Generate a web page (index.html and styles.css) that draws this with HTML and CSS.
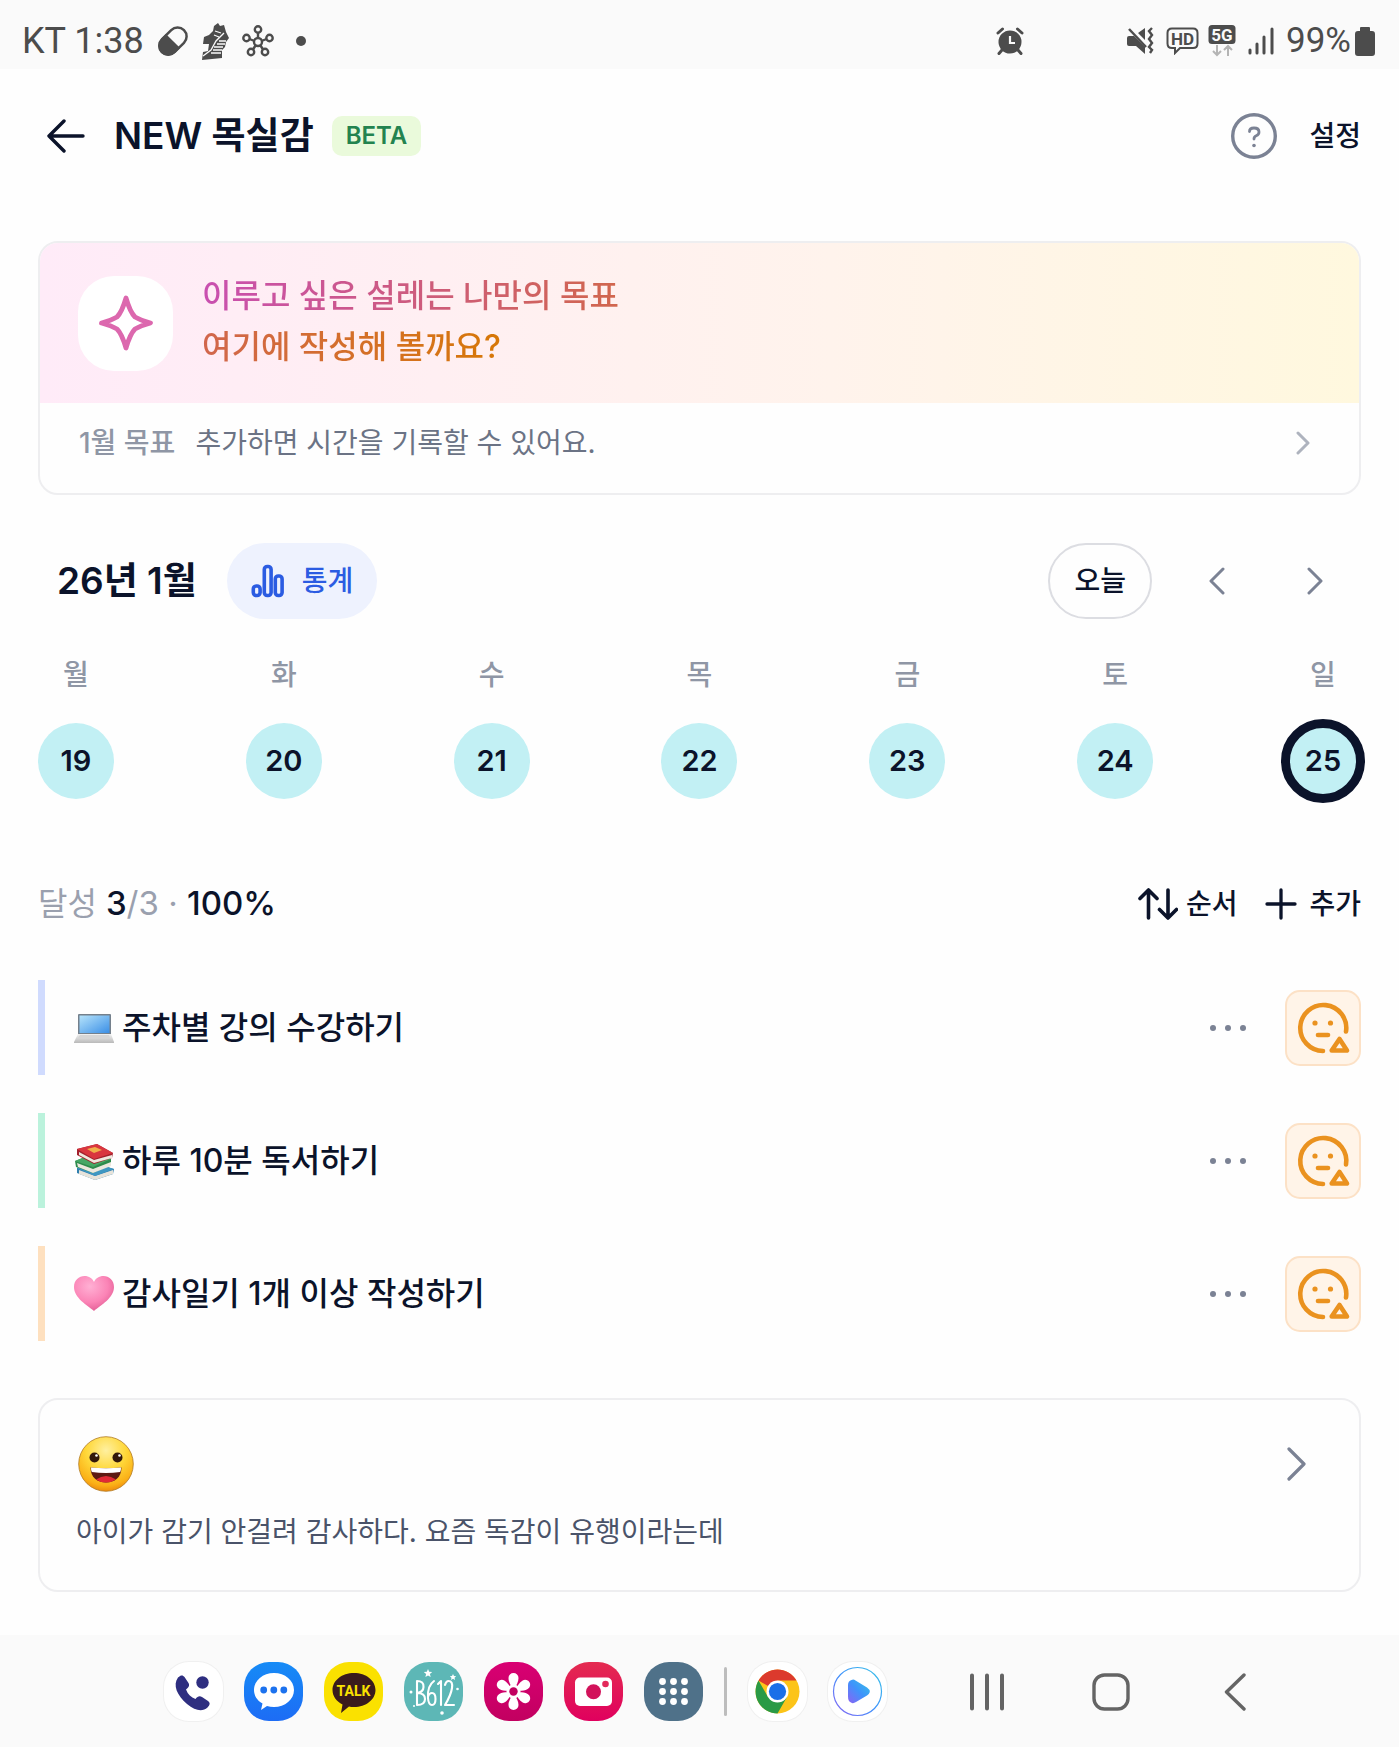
FILE: index.html
```html
<!DOCTYPE html>
<html lang="ko">
<head>
<meta charset="utf-8">
<meta name="viewport" content="width=device-width, initial-scale=1">
<title>NEW 목실감</title>
<link rel="stylesheet" href="styles.css">
</head>
<body>
<svg class="defs" width="0" height="0" aria-hidden="true">
  <defs>
    <linearGradient id="screenFill" x1="0" y1="0" x2="1" y2="1"><stop offset="0" stop-color="#b5e3fb"/><stop offset="1" stop-color="#3b8fe6"/></linearGradient>
    <linearGradient id="baseFill" x1="0" y1="0" x2="0" y2="1"><stop offset="0" stop-color="#f2f2f2"/><stop offset="1" stop-color="#b9b9b9"/></linearGradient>
    <radialGradient id="heartFill" cx=".4" cy=".3" r=".75"><stop offset="0" stop-color="#ffb0d4"/><stop offset=".6" stop-color="#fb84b6"/><stop offset="1" stop-color="#e05a92"/></radialGradient>
    <radialGradient id="faceFill" cx=".5" cy=".25" r=".8"><stop offset="0" stop-color="#fff0a0"/><stop offset=".45" stop-color="#ffd83a"/><stop offset=".8" stop-color="#fbb016"/><stop offset="1" stop-color="#e87a08"/></radialGradient>
    <linearGradient id="playFill" x1="0" y1="1" x2="1" y2="0"><stop offset="0" stop-color="#8a63f4"/><stop offset=".5" stop-color="#3f93fb"/><stop offset="1" stop-color="#35c3e6"/></linearGradient>
    <symbol id="face" viewBox="0 0 76 76">
      <g fill="none" stroke="#ea921f" stroke-width="4.600" stroke-linecap="round" stroke-linejoin="round">
        <path d="M61 41.500A23 23 0 1 0 38 61"/>
        <path d="M33 45h10"/>
        <path d="M54.500 49l7.500 11.500H46.700z"/>
      </g>
      <circle cx="30" cy="33" r="2.600" fill="#ea921f"/><circle cx="45.500" cy="33" r="2.600" fill="#ea921f"/>
    </symbol>
    <symbol id="dots" viewBox="0 0 38 8"><g fill="#7b8294"><circle cx="4" cy="4" r="3"/><circle cx="19" cy="4" r="3"/><circle cx="34" cy="4" r="3"/></g></symbol>
  </defs>
</svg>

<div class="screen">
  <div class="status">
    <span class="status-time">KT 1:38</span>
    <svg class="status-pill" width="34" height="34" viewBox="0 0 34 34"><g transform="rotate(-45 17 17)"><rect x="1.500" y="8" width="31" height="18" rx="9" fill="none" stroke="#4c4c4c" stroke-width="2.500"/><path d="M17 7H10a10 10 0 0 0 0 20h7z" fill="#4c4c4c"/></g></svg>
    <svg width="30" height="38" viewBox="0 0 30 38"><path d="M14 4l4-3 2 3 4-1 2 7 3 6-3 4-1 5-3 3 0 8-20 2 1-8 5-1 1-7H3l1-7 5-2 4-4z" fill="#4c4c4c"/><g stroke="#fafafa" stroke-width="1.300" fill="none"><path d="M14 25h9M13 28h9M11 31h10M17 22h8M19 19h7M3 34l8-6 5-9 8-8M15 9l6 2M14 13l5 2"/></g></svg>
    <svg class="status-hub" width="32" height="32" viewBox="0 0 32 32"><g fill="none" stroke="#4c4c4c" stroke-width="2.400"><circle cx="16" cy="17" r="4"/><circle cx="16" cy="4.500" r="3.200"/><circle cx="4.500" cy="13" r="3.200"/><circle cx="27.500" cy="13" r="3.200"/><circle cx="9" cy="27" r="3.200"/><circle cx="23" cy="27" r="3.200"/><path d="M16 8v5M7.500 14l5 2M24.500 14l-5 2M11 24.500l2.500-4M21 24.500l-2.500-4"/></g></svg>
    <svg width="10" height="10" viewBox="0 0 10 10"><circle cx="5" cy="5" r="5" fill="#4c4c4c"/></svg>
    <span class="status-space"></span>
    <svg class="status-alarm" width="28" height="28" viewBox="0 0 28 28"><circle cx="14" cy="15" r="11.500" fill="#4c4c4c"/><path d="M14 9v7h5" fill="none" stroke="#fafafa" stroke-width="2.200"/><path d="M2 6l4.500-4M26 6l-4.500-4M6 23l-3 3.500M22 23l3 3.500" stroke="#4c4c4c" stroke-width="3" stroke-linecap="round"/></svg>
    <svg width="28" height="28" viewBox="0 0 28 28"><path d="M1 11q0-2 2-2h5l11 11v7l-9-8H3q-2 0-2-2zM12 6l7-5v12z" fill="#4c4c4c"/><path d="M3 2l17 18" stroke="#4c4c4c" stroke-width="2.500"/><path d="M26 1l-3 3 3 4-3 4 3 4-3 4 3 3-2 3" fill="none" stroke="#4c4c4c" stroke-width="2.400"/></svg>
    <svg class="status-hd" width="33" height="28" viewBox="0 0 33 28"><path d="M6 1.500h21q4.500 0 4.500 4.500v10.500q0 4.500-4.500 4.500H14l-5 5v-5H6q-4.500 0-4.500-4.500V6q0-4.500 4.500-4.500z" fill="none" stroke="#4c4c4c" stroke-width="2"/><text x="16.500" y="17.500" text-anchor="middle" class="glyph-hd">HD</text></svg>
    <svg class="status-5g" width="28" height="32" viewBox="0 0 28 32"><rect x=".5" width="27" height="19" rx="3.500" fill="#4c4c4c"/><text x="14" y="16" text-anchor="middle" class="glyph-5g">5G</text><path d="M9 20v10M5 26l4 4 4-4M20 31V21M16 25l4-4 4 4" fill="none" stroke="#b4b4b4" stroke-width="2"/></svg>
    <svg class="status-bars" width="26" height="28" viewBox="0 0 26 28"><path d="M2 23v3M9 17v9M16 10v16M24 2v24" stroke="#4c4c4c" stroke-width="3" stroke-linecap="round"/></svg>
    <span class="status-battery">99%</span>
    <svg width="20" height="29" viewBox="0 0 20 29"><path d="M6 0h8q1 0 1 1v3h2q3 0 3 3v19q0 3-3 3H3q-3 0-3-3V7q0-3 3-3h2V1q0-1 1-1z" fill="#4c4c4c"/></svg>
  </div>

  <header class="header">
    <button class="icon-button" aria-label="뒤로"><svg width="38" height="34" viewBox="0 0 38 34"><path d="M36 17H2M17 2L2 17l15 15" fill="none" stroke="#0b132a" stroke-width="3.400" stroke-linecap="round" stroke-linejoin="round"/></svg></button>
    <h1 class="title">NEW 목실감</h1>
    <span class="badge">BETA</span>
    <button class="icon-button help" aria-label="도움말"><svg width="46" height="46" viewBox="0 0 46 46"><circle cx="23" cy="23" r="21.300" fill="none" stroke="#7b8294" stroke-width="3.400"/><path d="M18.500 18.500q0-3.500 4.500-3.500 5 0 5 4 0 2.600-2.800 3.700-2.200 .9-2.200 3.300" fill="none" stroke="#7b8294" stroke-width="2.800" stroke-linecap="round"/><circle cx="23" cy="32.500" r="1.800" fill="#7b8294"/></svg></button>
    <button class="text-button">설정</button>
  </header>

  <main class="main">
    <section class="goal">
      <div class="goal-banner">
        <span class="goal-icon"><svg width="56" height="56" viewBox="0 0 56 56"><path d="M28 3c3.500 12 7 17 9 19 3.500 2 8 4 15.500 6-7.500 2-12 4-15.500 6-2 2-5.500 7-9 19-3.500-12-7-17-9-19-3.500-2-8-4-15.500-6 7.500-2 12-4 15.500-6 2-2 5.500-7 9-19z" fill="none" stroke="#dc68ae" stroke-width="4.800" stroke-linejoin="round"/></svg></span>
        <p class="goal-text"><span>이루고 싶은 설레는 나만의 목표<br>여기에 작성해 볼까요?</span></p>
      </div>
      <a class="goal-link" href="#goal">
        <span class="goal-month">1월 목표</span>
        <span>추가하면 시간을 기록할 수 있어요.</span>
        <svg width="14" height="24" viewBox="0 0 14 24"><path d="M2 2l10 10L2 22" fill="none" stroke="#aeb3be" stroke-width="3" stroke-linecap="round" stroke-linejoin="round"/></svg>
      </a>
    </section>

    <section class="calendar">
      <div class="month-row">
        <h2 class="month">26년 1월</h2>
        <button class="pill stats"><svg width="34" height="34" viewBox="0 0 34 34"><g fill="none" stroke="#2b5ce2" stroke-width="3.600"><rect x="2.300" y="22" width="6.800" height="9.500" rx="3"/><rect x="13.300" y="2.500" width="6.800" height="29" rx="3"/><rect x="24.300" y="12" width="6.800" height="19.500" rx="3"/></g></svg>통계</button>
        <button class="pill today">오늘</button>
        <div class="pager">
          <button class="icon-button" aria-label="이전 주"><svg width="18" height="28" viewBox="0 0 18 28"><path d="M15 2L3 14l12 12" fill="none" stroke="#7b8294" stroke-width="3" stroke-linecap="round" stroke-linejoin="round"/></svg></button>
          <button class="icon-button" aria-label="다음 주"><svg width="18" height="28" viewBox="0 0 18 28"><path d="M3 2l12 12L3 26" fill="none" stroke="#7b8294" stroke-width="3" stroke-linecap="round" stroke-linejoin="round"/></svg></button>
        </div>
      </div>
      <ol class="week">
        <li>월<button class="day">19</button></li>
        <li>화<button class="day">20</button></li>
        <li>수<button class="day">21</button></li>
        <li>목<button class="day">22</button></li>
        <li>금<button class="day">23</button></li>
        <li>토<button class="day">24</button></li>
        <li>일<button class="day day-selected" aria-current="date">25</button></li>
      </ol>
    </section>

    <section class="todo">
      <div class="todo-head">
        <p class="progress">달성 <span class="figures"><b>3</b>/3 · <b>100%</b></span></p>
        <button class="text-button"><svg width="40" height="32" viewBox="0 0 40 32"><path d="M10.500 30V2M2 10.500L10.500 2l8.500 8.500M30 2v28M21.500 21.500L30 30l8.500-8.500" fill="none" stroke="#0b132a" stroke-width="3.600" stroke-linecap="round" stroke-linejoin="round"/></svg>순서</button>
        <button class="text-button add"><svg width="32" height="32" viewBox="0 0 32 32"><path d="M16 2v28M2 16h28" stroke="#0b132a" stroke-width="3.300" stroke-linecap="round"/></svg>추가</button>
      </div>
      <ul class="tasks">
        <li class="task task-blue">
          <svg width="40" height="40" viewBox="0 0 40 40"><path d="M5 6h31q1 0 1 1v19H4V7q0-1 1-1z" fill="#74808c"/><path d="M5.500 7.500h30v17.500h-30z" fill="url(#screenFill)"/><path d="M4 26h33l3 8v1H0v-1z" fill="url(#baseFill)"/><path d="M6 27h29l1 3H4z" fill="#d6d6d6"/></svg>
          <span class="task-name">주차별 강의 수강하기</span>
          <button class="icon-button" aria-label="더보기"><svg width="38" height="8"><use href="#dots"/></svg></button>
          <button class="mood" aria-label="평가"><svg width="76" height="76"><use href="#face"/></svg></button>
        </li>
        <li class="task task-green">
          <svg width="40" height="40" viewBox="0 0 40 40"><path d="M3 27l14-6 23 7-1 5-18 6-18-7z" fill="#2f7fae"/><path d="M5 29l16 6 18-6v4l-18 6-16-6z" fill="#e7e3da"/><path d="M3 27l14-6 23 7-19 7z" fill="#3f97c2"/><path d="M1 20l15-6 21 4v6l-18 8-17-6z" fill="#2e8b4c"/><path d="M3 22l16 6 18-7v4l-18 7-15-6z" fill="#ece8de"/><path d="M1 20l15-6 21 4-18 8z" fill="#46a765"/><path d="M3 8l20-5 16 9-1 5-18 6L3 14z" fill="#a3202d"/><path d="M5 11l15 8 18-5v3l-18 5-15-8z" fill="#efe9df"/><path d="M3 8l20-5 16 9-19 6z" fill="#d9363f"/><path d="M13 8l8-2 7 3-8 3z" fill="#f0b04a"/></svg>
          <span class="task-name">하루 10분 독서하기</span>
          <button class="icon-button" aria-label="더보기"><svg width="38" height="8"><use href="#dots"/></svg></button>
          <button class="mood" aria-label="평가"><svg width="76" height="76"><use href="#face"/></svg></button>
        </li>
        <li class="task task-orange">
          <svg width="40" height="40" viewBox="0 0 40 40"><path d="M20 37C13 31 0 24 0 13 0 6 5 2 10.500 2 15 2 18.500 4.500 20 8c1.500-3.500 5-6 9.500-6C35 2 40 6 40 13c0 11-13 18-20 24z" fill="url(#heartFill)"/></svg>
          <span class="task-name">감사일기 1개 이상 작성하기</span>
          <button class="icon-button" aria-label="더보기"><svg width="38" height="8"><use href="#dots"/></svg></button>
          <button class="mood" aria-label="평가"><svg width="76" height="76"><use href="#face"/></svg></button>
        </li>
      </ul>
    </section>

    <a class="note" href="#note">
      <span class="note-head">
        <svg width="56" height="56" viewBox="0 0 56 56"><circle cx="28" cy="28" r="27.300" fill="url(#faceFill)" stroke="#b07a25" stroke-width=".8"/><circle cx="16.500" cy="21.500" r="5" fill="#33180a"/><circle cx="39.500" cy="21.500" r="5" fill="#33180a"/><circle cx="18.500" cy="19.500" r="1.300" fill="#fff"/><circle cx="41.500" cy="19.500" r="1.300" fill="#fff"/><path d="M12.500 31.500q15.500 1.500 31 0c0 10-7 15-15.500 15s-15.500-5-15.500-15z" fill="#5d1a12"/><path d="M13 31.500q15 1.500 30 0 .2 2-.8 4.500-14.200 1.800-28.400 0-1-2.500-.8-4.500z" fill="#fff"/><path d="M18 43.500q10-7 20 0-4.500 3-10 3t-10-3z" fill="#e02a35"/></svg>
        <svg width="20" height="34" viewBox="0 0 20 34"><path d="M2 2l15 15L2 32" fill="none" stroke="#7b8294" stroke-width="3.200" stroke-linecap="round" stroke-linejoin="round"/></svg>
      </span>
      <span class="note-text">아이가 감기 안걸려 감사하다. 요즘 독감이 유행이라는데</span>
    </a>
  </main>

  <nav class="dock">
    <div class="apps">
      <button class="app app-white" aria-label="전화"><svg width="59" height="59" viewBox="0 0 59 59"><path d="M14 15.500c3-3 5-2.500 6.500-.5l4 6c1.500 2.500 0 4.500-2.500 6.500 2 5 5 8 9.500 9.500 2-2.500 4-3.500 6.500-2l6 4c2.500 2 2 4-.5 6.500-5 4.500-12 3.500-20.500-3.500C13 33.500 8.500 23 14 15.500z" fill="#2e2e80"/><circle cx="38.500" cy="20.500" r="6.200" fill="#2e2e80"/></svg></button>
      <button class="app app-blue" aria-label="메시지"><svg width="59" height="59" viewBox="0 0 59 59"><path d="M30 11c11 0 20 7.500 20 17s-9 17-20 17q-4 0-7-1l-6 4 1.500-6.500C13 38.500 10 33.500 10 28c0-9.500 9-17 20-17z" fill="#fff"/><g fill="#1c72ee"><circle cx="19.700" cy="28" r="3.400"/><circle cx="29.800" cy="28" r="3.400"/><circle cx="39.800" cy="28" r="3.400"/></g></svg></button>
      <button class="app app-yellow" aria-label="톡"><svg width="59" height="59" viewBox="0 0 59 59"><path d="M30 11c12 0 21.500 7.500 21.500 17S42 45 30 45q-3 0-5-.5L17 51l1.500-8.500C12.500 39.500 8.500 34 8.500 28 8.500 18.500 18 11 30 11z" fill="#3a1a1c"/><text x="29.500" y="34" text-anchor="middle" class="glyph-talk">TALK</text></svg></button>
      <button class="app app-teal" aria-label="B612"><svg width="59" height="59" viewBox="0 0 59 59"><g fill="none" stroke="#fff" stroke-width="2.100" stroke-linecap="round" stroke-linejoin="round"><path d="M13 19v24M13 19q7 0 6.500 6 0 5-6.500 6 8 0 8 6t-8 6"/><path d="M30 19q-7 5-6 17 .5 7 4 7 3.500 0 3.500-6t-3.500-6q-3 0-4 4"/><path d="M34 22l3-3v24"/><path d="M41 23q1-4 3.500-4 4.500 0 3.500 7-1 7-7 17h9"/></g><g fill="#fff"><path d="M24 7l1.200 2.800 3 .2-2.300 2 .8 3-2.700-1.600-2.600 1.600.7-3-2.300-2 3-.2zM49 12l1 2 2.200.2-1.700 1.500.6 2.300-2.100-1.200-2 1.200.5-2.300-1.700-1.500 2.200-.2z"/><circle cx="7" cy="30" r="1.500"/><circle cx="53.500" cy="27" r="1.300"/><circle cx="38" cy="51" r="1.800"/><circle cx="10" cy="44" r="1"/></g></svg></button>
      <button class="app app-magenta" aria-label="갤러리"><svg width="59" height="59" viewBox="0 0 59 59"><g fill="#fff"><g id="petal"><path d="M29.500 28c-3-5-5-8-5-12a5 5 0 0 1 10 0c0 4-2 7-5 12z"/></g><use href="#petal" transform="rotate(60 29.500 29.500)"/><use href="#petal" transform="rotate(120 29.500 29.500)"/><use href="#petal" transform="rotate(180 29.500 29.500)"/><use href="#petal" transform="rotate(240 29.500 29.500)"/><use href="#petal" transform="rotate(300 29.500 29.500)"/><circle cx="29.500" cy="29.500" r="7"/></g><circle cx="29.500" cy="29.500" r="4.200" fill="#c20060"/></svg></button>
      <button class="app app-red" aria-label="카메라"><svg width="59" height="59" viewBox="0 0 59 59"><rect x="11" y="15.500" width="37" height="28.500" rx="5" fill="#fff"/><circle cx="29.500" cy="29.800" r="7.500" fill="#d2125a"/><circle cx="41.500" cy="22" r="3.300" fill="#e2295a"/></svg></button>
      <button class="app app-slate" aria-label="앱 목록"><svg width="59" height="59" viewBox="0 0 59 59"><g fill="#fff"><circle cx="18.500" cy="19.500" r="3.400"/><circle cx="29.500" cy="19.500" r="3.400"/><circle cx="40.500" cy="19.500" r="3.400"/><circle cx="18.500" cy="29.500" r="3.400"/><circle cx="29.500" cy="29.500" r="3.400"/><circle cx="40.500" cy="29.500" r="3.400"/><circle cx="18.500" cy="39.500" r="3.400"/><circle cx="29.500" cy="39.500" r="3.400"/><circle cx="40.500" cy="39.500" r="3.400"/></g></svg></button>
      <span class="divider"></span>
      <button class="app app-white" aria-label="Chrome"><svg width="59" height="59" viewBox="0 0 59 59"><circle cx="29.500" cy="29.500" r="22" fill="#fcc419"/><path d="M29.500 29.500L10.500 18.500A22 22 0 0 1 48.500 18.500H29.500z" fill="#dc3a2d"/><path d="M10.500 18.500A22 22 0 0 0 29.500 51.500L39 35 29.500 29.500 20 35z" fill="#2a9a46"/><circle cx="29.500" cy="29.500" r="11" fill="#fff"/><circle cx="29.500" cy="29.500" r="8.600" fill="#1a6fe8"/></svg></button>
      <button class="app app-white" aria-label="재생"><svg width="59" height="59" viewBox="0 0 59 59"><circle cx="29.500" cy="29.500" r="24" fill="#fff" stroke="url(#playFill)" stroke-width="1.200"/><path d="M23.500 18q2-1 4 .5l11.500 7q5.500 4 0 8L28 40q-3 2-5 .5-3-1-3-6V23q0-4 3.500-5z" fill="url(#playFill)"/></svg></button>
    </div>
    <div class="keys">
      <button class="icon-button" aria-label="최근 앱"><svg width="36" height="38" viewBox="0 0 36 38"><path d="M3 2.500v33M18 2.500v33M33 2.500v33" stroke="#646464" stroke-width="4" stroke-linecap="round"/></svg></button>
      <button class="icon-button" aria-label="홈"><svg width="38" height="38" viewBox="0 0 38 38"><rect x="2" y="2" width="34" height="34" rx="10.500" fill="none" stroke="#646464" stroke-width="3.400"/></svg></button>
      <button class="icon-button" aria-label="뒤로 가기"><svg width="22" height="38" viewBox="0 0 22 38"><path d="M20 2L2.500 19 20 36" fill="none" stroke="#646464" stroke-width="3.400" stroke-linecap="round" stroke-linejoin="round"/></svg></button>
    </div>
  </nav>
</div>
</body>
</html>
```
FILE: styles.css
```css
* {
  box-sizing: border-box;
}

body {
  margin: 0;
  background: #fefefe;
  color: #0b132a;
  font-family: Inter, "Noto Sans CJK KR", sans-serif;
  font-size: 28px;
  line-height: 40px;
}

.defs {
  display: block;
}

h1,
h2,
p,
ol,
ul {
  margin: 0;
  padding: 0;
  font-weight: inherit;
}

ol,
ul {
  list-style: none;
}

button {
  padding: 0;
  border: 0;
  background: none;
  color: inherit;
  font: inherit;
}

a {
  color: inherit;
  text-decoration: none;
}

svg {
  flex: none;
}

.screen {
  display: flex;
  flex-direction: column;
  min-height: 100vh;
}

/* Status bar */

.status {
  display: flex;
  align-items: center;
  height: 69px;
  padding: 13px 24px 0 22px;
  background: #fafafa;
  color: #4c4c4c;
  font-family: Roboto, sans-serif;
  font-size: 35px;
}

.status-time {
  font-size: 36px;
}

.status-pill {
  margin: 0 10px 0 12px;
}

.status-hub {
  margin: 0 22px 0 12px;
}

.status-space {
  flex: 1;
}

.status-alarm {
  margin-right: 102px;
}

.status-hd {
  margin-left: 12px;
}

.status-5g {
  margin: 0 12px 0 9px;
}

.status-battery {
  margin: 0 4px 0 12px;
}

.glyph-hd {
  fill: #4c4c4c;
  font: 700 17px Roboto, sans-serif;
}

.glyph-5g {
  fill: #fafafa;
  font: 700 17px Roboto, sans-serif;
}

.glyph-talk {
  fill: #fae100;
  font: 700 14px Roboto, sans-serif;
}

/* App header */

.header {
  display: flex;
  align-items: center;
  height: 134px;
  padding: 0 38px 0 47px;
}

.icon-button {
  display: flex;
  align-items: center;
  justify-content: center;
}

.title {
  margin-left: 29px;
  font-size: 37px;
  font-weight: 600;
}

.badge {
  margin-left: 18px;
  padding: 0 14px;
  border-radius: 10px;
  background: #eafadb;
  color: #23834f;
  font-size: 24px;
  font-weight: 600;
}

.help {
  margin-left: auto;
}

.text-button {
  display: flex;
  align-items: center;
  gap: 8px;
  font-weight: 500;
}

.help + .text-button {
  margin-left: 32px;
}

/* Content */

.main {
  flex: 1;
  padding: 38px 38px 43px;
}

.goal {
  overflow: hidden;
  border: 2px solid #eeeef0;
  border-radius: 20px;
}

.goal-banner {
  display: flex;
  align-items: center;
  gap: 29px;
  height: 160px;
  padding: 0 38px;
  background: linear-gradient(90deg, #ffebf8, #fff3ec 60%, #fff8de);
}

.goal-icon {
  display: flex;
  align-items: center;
  justify-content: center;
  width: 95px;
  height: 95px;
  border-radius: 36px;
  background: #fff;
}

.goal-text {
  padding-bottom: 4px;
  font-size: 32px;
  font-weight: 500;
  line-height: 51px;
}

.goal-text span {
  background: linear-gradient(90deg, #c94fb0, #d77706);
  -webkit-background-clip: text;
  background-clip: text;
  color: transparent;
}

.goal-link {
  display: flex;
  align-items: center;
  gap: 20px;
  padding: 20px 49px 30px 39px;
  color: #6b7385;
}

.goal-link svg {
  margin-left: auto;
}

.goal-month {
  color: #8f96a5;
  font-weight: 500;
}

/* Calendar */

.month-row {
  display: flex;
  align-items: center;
  margin-top: 48px;
  padding-left: 19px;
}

.month {
  font-size: 37px;
  font-weight: 600;
}

.pill {
  display: flex;
  align-items: center;
  height: 76px;
  padding: 0 24px;
  border-radius: 38px;
  font-weight: 500;
}

.stats {
  gap: 17px;
  margin-left: 30px;
  background: #eef2fe;
  color: #2b5ce2;
}

.today {
  margin-left: auto;
  border: 2px solid #dcdde2;
}

.pager {
  display: flex;
  gap: 6px;
  margin-left: 19px;
}

.pager .icon-button {
  width: 92px;
  height: 76px;
}

.week {
  display: flex;
  justify-content: space-between;
  margin-top: 36px;
}

.week li {
  width: 76px;
  color: #8f96a5;
  font-weight: 500;
  text-align: center;
}

.day {
  display: block;
  width: 76px;
  height: 76px;
  margin-top: 28px;
  border-radius: 50%;
  background: #c2f0f4;
  color: #0b132a;
  font-size: 29px;
  font-weight: 600;
}

/* The ring spreads 4px beyond the ordinary circle */
.day-selected {
  width: 84px;
  height: 84px;
  margin: 24px -4px -4px;
  border: 9px solid #0b132a;
}

/* Tasks */

.todo-head {
  display: flex;
  align-items: center;
  margin-top: 84px;
}

.progress {
  flex: 1;
  color: #9aa0ae;
  font-size: 32px;
}

.figures {
  font-size: 33px;
}

.progress b {
  color: #0b132a;
  font-weight: 500;
}

.add {
  gap: 12px;
  margin-left: 28px;
}

.tasks {
  display: flex;
  flex-direction: column;
  gap: 38px;
  margin-top: 56px;
}

.task {
  display: flex;
  align-items: center;
  height: 95px;
  padding-left: 29px;
  border-left: 7px solid;
}

.task-blue {
  border-color: #d0dbfe;
}

.task-green {
  border-color: #bbf2dc;
}

.task-orange {
  border-color: #fee0bf;
}

.task-name {
  flex: 1;
  margin-left: 8px;
  color: #0b132a;
  font-size: 32px;
  font-weight: 500;
}

.mood {
  display: flex;
  align-items: center;
  justify-content: center;
  width: 76px;
  height: 76px;
  margin-left: 38px;
  border: 2px solid #fce1c6;
  border-radius: 15px;
  background: #fff4e8;
}

/* Gratitude note */

.note {
  display: block;
  margin-top: 57px;
  padding: 36px 52px 38px 36px;
  border: 2px solid #eeeef0;
  border-radius: 20px;
  color: #4a5369;
}

.note-head {
  display: flex;
  align-items: center;
  justify-content: space-between;
  margin: 0 0 20px 2px;
}

.note-text {
  display: block;
}

/* System dock */

.dock {
  display: flex;
  align-items: center;
  justify-content: center;
  gap: 38px;
  height: 113px;
  padding-left: 61px;
  background: #fafafa;
}

.apps {
  display: flex;
  align-items: center;
  gap: 21px;
}

.app {
  display: flex;
  width: 59px;
  height: 59px;
  border-radius: 25px;
}

.app-white {
  background: #fff;
  box-shadow: 0 0 0 1px #f0f0f0;
}

.app-blue {
  background: linear-gradient(#168bf6, #1d6cf5);
}

.app-yellow {
  background: #fae100;
}

.app-teal {
  background: #5db7b6;
}

.app-magenta {
  background: linear-gradient(#d90073, #c20060);
}

.app-red {
  background: linear-gradient(#e42b50, #e0005e);
}

.app-slate {
  background: #4f7189;
}

.divider {
  width: 3px;
  height: 49px;
  border-radius: 2px;
  background: #bdbdbd;
}

.keys {
  display: flex;
}

.keys .icon-button {
  width: 124px;
  height: 76px;
}
```
